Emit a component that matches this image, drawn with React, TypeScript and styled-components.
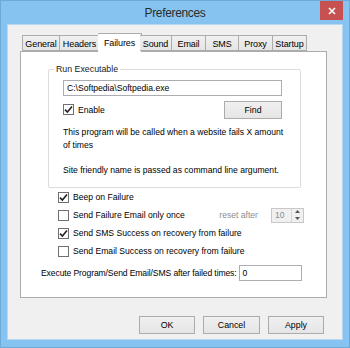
import styled, { createGlobalStyle } from 'styled-components';

const GlobalStyle = createGlobalStyle`
  html, body {
    margin: 0;
    padding: 0;
    background: #87c3f1;
  }
  body {
    font-family: "Liberation Sans", Arial, sans-serif;
    font-size: 8.6px;
    color: #000;
  }
`;

const Window = styled.div`
  width: 350px;
  height: 348px;
  box-sizing: border-box;
  background: #87c3f1;
  border: 1px solid #6fa9d8;
  display: flex;
  flex-direction: column;
`;

const TitleBar = styled.div`
  height: 23px;
  display: grid;
  grid-template-columns: 1fr auto 1fr;
  align-items: start;
`;

const Title = styled.div`
  grid-column: 2;
  font-size: 12px;
  letter-spacing: -0.35px;
  color: #2b2b2b;
  padding-top: 5px;
`;

const CloseButton = styled.div`
  grid-column: 3;
  justify-self: end;
  margin-right: 6px;
  width: 23px;
  height: 19px;
  background: #c75050;
  display: flex;
  align-items: center;
  justify-content: center;
`;

const Client = styled.div`
  margin: 0 6px 0 6px;
  height: 316px;
  background: #f0f0f0;
  border: 1px solid #b9d8f0;
  box-sizing: border-box;
  padding: 8px 16px 0 12px;
  display: flex;
  flex-direction: column;
`;

const TabStrip = styled.div`
  display: flex;
  align-items: flex-end;
  height: 18px;
  padding-left: 2px;
  position: relative;
  z-index: 1;
`;

const Tab = styled.div<{ $active?: boolean; $w: number }>`
  width: ${p => p.$w}px;
  box-sizing: border-box;
  height: ${p => (p.$active ? 19 : 16)}px;
  margin-bottom: ${p => (p.$active ? -1 : 0)}px;
  border: 1px solid #acacac;
  border-bottom: ${p => (p.$active ? 'none' : '1px solid #acacac')};
  margin-left: ${p => (p.$active ? -2 : 0)}px;
  margin-right: ${p => (p.$active ? -2 : 0)}px;
  background: ${p => (p.$active ? '#fff' : 'linear-gradient(#f0f0f0, #e5e5e5)')};
  display: flex;
  align-items: center;
  justify-content: center;
  font-size: 9px;
  letter-spacing: -0.1px;
  padding-top: ${p => (p.$active ? 0 : 1)}px;
  & + & {
    border-left: ${p => (p.$active ? '1px solid #acacac' : 'none')};
  }
`;

const Panel = styled.div`
  width: 307px;
  height: 247px;
  box-sizing: border-box;
  background: #fff;
  border: 1px solid #acacac;
  padding: 12px 0 0 20px;
  display: flex;
  flex-direction: column;
`;

const GroupBox = styled.fieldset`
  margin: 0 0 0 7px;
  width: 253px;
  height: 124px;
  box-sizing: border-box;
  border: 1px solid #dcdcdc;
  border-radius: 2px;
  padding: 6px 0 0 14px;
  display: flex;
  flex-direction: column;
`;

const Legend = styled.legend`
  padding: 0 2px;
  margin-left: -9px;
  font-size: 8.8px;
  line-height: 10px;
  color: #1a1a1a;
`;

const TextInput = styled.div<{ $w: number }>`
  width: ${p => p.$w}px;
  height: 16px;
  box-sizing: border-box;
  border: 1px solid #abadb3;
  background: #fff;
  padding: 0 3px;
  display: flex;
  align-items: center;
`;

const Row = styled.div<{ $h?: number }>`
  display: flex;
  align-items: center;
  height: ${p => p.$h ?? 18}px;
`;

const CheckRow = styled(Row)`
  gap: 4px;
`;

const EnableRow = styled(Row)`
  margin-top: 5px;
  width: 219px;
  justify-content: space-between;
`;

const Box = styled.div`
  width: 11px;
  height: 11px;
  box-sizing: border-box;
  border: 1px solid #707070;
  background: #fff;
  display: flex;
  align-items: center;
  justify-content: center;
`;

const Button = styled.div<{ $w: number }>`
  width: ${p => p.$w}px;
  height: 18px;
  box-sizing: border-box;
  border: 1px solid #acacac;
  background: linear-gradient(#f0f0f0, #e5e5e5);
  display: flex;
  align-items: center;
  justify-content: center;
  font-size: 8.8px;
`;

const Note = styled.div<{ $gap: number }>`
  width: 225px;
  line-height: 12.5px;
  margin-top: ${p => p.$gap}px;
`;

const Options = styled.div`
  padding-left: 17px;
`;

const Muted = styled.span`
  color: #8d8d8d;
  margin-right: 9px;
`;

const Grow = styled.span`
  flex: 1;
`;

const Spacer = styled.span`
  width: 18px;
`;

const Spin = styled.div`
  width: 33px;
  height: 15px;
  box-sizing: border-box;
  border: 1px solid #c8c8c8;
  background: #f0f0f0;
  display: flex;
  align-items: center;
  justify-content: space-between;
  padding-left: 3px;
  color: #8d8d8d;
`;

const SpinArrows = styled.div`
  width: 11px;
  height: 13px;
  border-left: 1px solid #d6d6d6;
  display: flex;
  flex-direction: column;
  align-items: center;
  justify-content: space-around;
`;

const ExecRow = styled(Row)`
  margin-top: 5px;
  gap: 2px;
  span {
    letter-spacing: -0.12px;
  }
`;

const Footer = styled.div`
  display: flex;
  justify-content: flex-end;
  gap: 8px;
  margin-top: 18px;
  margin-right: 2px;
`;

function Check({ checked }: { checked?: boolean }) {
  return (
    <Box>
      {checked && (
        <svg width="9" height="9" viewBox="0 0 9 9">
          <path d="M1 4.6 L3.4 7 L8 1.6" fill="none" stroke="#222" strokeWidth="1.6" />
        </svg>
      )}
    </Box>
  );
}

const tabs = [
  { label: 'General', w: 38 },
  { label: 'Headers', w: 40 },
  { label: 'Failures', w: 44, active: true },
  { label: 'Sound', w: 32 },
  { label: 'Email', w: 34 },
  { label: 'SMS', w: 33 },
  { label: 'Proxy', w: 34 },
  { label: 'Startup', w: 34 },
];

export default function App() {
  return (
    <>
      <GlobalStyle />
      <Window>
        <TitleBar>
          <Title>Preferences</Title>
          <CloseButton>
            <svg width="8" height="8" viewBox="0 0 8 8">
              <path d="M1 1 L7 7 M7 1 L1 7" stroke="#fff" strokeWidth="1.6" />
            </svg>
          </CloseButton>
        </TitleBar>
        <Client>
          <TabStrip>
            {tabs.map(t => (
              <Tab key={t.label} $active={t.active} $w={t.w}>
                {t.label}
              </Tab>
            ))}
          </TabStrip>
          <Panel>
            <GroupBox>
              <Legend>Run Executable</Legend>
              <TextInput $w={219}>C:\Softpedia\Softpedia.exe</TextInput>
              <EnableRow $h={17}>
                <CheckRow>
                  <Check checked />
                  <span>Enable</span>
                </CheckRow>
                <Button $w={58}>Find</Button>
              </EnableRow>
              <Note $gap={8}>
                This program will be called when a website fails X amount of times
              </Note>
              <Note $gap={12.5}>
                Site friendly name is passed as command line argument.
              </Note>
            </GroupBox>
            <Options>
              <CheckRow>
                <Check checked />
                <span>Beep on Failure</span>
              </CheckRow>
              <CheckRow>
                <Check />
                <Grow>Send Failure Email only once</Grow>
                <Muted>reset after</Muted>
                <Spin>
                  10
                  <SpinArrows>
                    <svg width="5" height="3" viewBox="0 0 5 3">
                      <path d="M0 3 L2.5 0 L5 3 Z" fill="#555" />
                    </svg>
                    <svg width="5" height="3" viewBox="0 0 5 3">
                      <path d="M0 0 L2.5 3 L5 0 Z" fill="#555" />
                    </svg>
                  </SpinArrows>
                </Spin>
                <Spacer />
              </CheckRow>
              <CheckRow>
                <Check checked />
                <span>Send SMS Success on recovery from failure</span>
              </CheckRow>
              <CheckRow>
                <Check />
                <span>Send Email Success on recovery from failure</span>
              </CheckRow>
            </Options>
            <ExecRow $h={16}>
              <span>Execute Program/Send Email/SMS after failed times:</span>
              <TextInput $w={63}>0</TextInput>
            </ExecRow>
          </Panel>
          <Footer>
            <Button $w={56}>OK</Button>
            <Button $w={57}>Cancel</Button>
            <Button $w={56}>Apply</Button>
          </Footer>
        </Client>
      </Window>
    </>
  );
}
